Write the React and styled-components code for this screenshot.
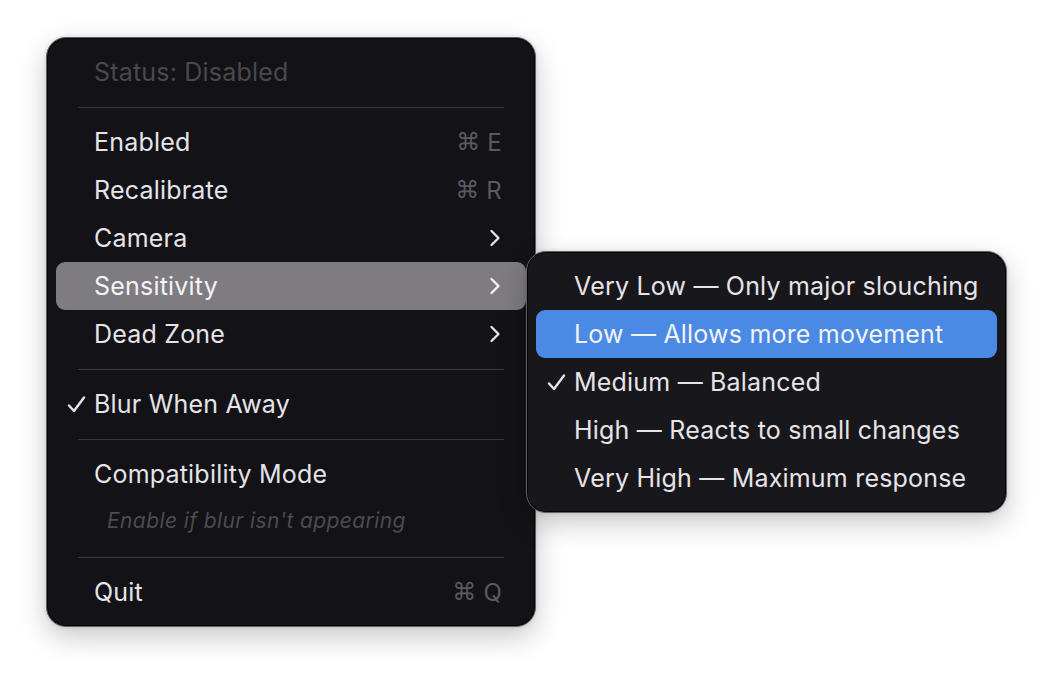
import React from "react";
import styled, { createGlobalStyle } from "styled-components";

const GlobalStyle = createGlobalStyle`
  html, body {
    margin: 0;
    background: #ffffff;
  }
  body {
    font-family: Inter, "Noto Sans", "DejaVu Sans", sans-serif;
    -webkit-font-smoothing: antialiased;
  }
`;

const Stage = styled.div`
  width: 1054px;
  height: 680px;
  box-sizing: border-box;
  padding: 37px 0 0 46px;
`;

const Panel = styled.div`
  box-sizing: border-box;
  width: ${(p) => p.$width}px;
  padding: 10px 9px;
  background: #131216;
  border: 1px solid #626166;
  border-radius: 20px;
  box-shadow: inset 0 0 0 1px #050407, 0 10px 28px rgba(0, 0, 0, 0.22),
    0 0 4px rgba(0, 0, 0, 0.12);
`;

const Flyout = styled(Panel)`
  position: absolute;
  top: -11px;
  left: 470px;
  z-index: 2;
  background: #18171b;
`;

const Item = styled.div`
  position: relative;
  display: grid;
  grid-template-columns: 38px 1fr auto;
  align-items: center;
  height: 48px;
  padding-right: ${(p) => (p.$submenu ? 25 : 24)}px;
  border-radius: 9px;
  font-size: 25px;
  letter-spacing: 0.2px;
  color: ${(p) => (p.$disabled ? "#4a494e" : "#e6e4e9")};
  background: ${(p) =>
    p.$active === "blue" ? "#4a89e4" : p.$active ? "#7e7c81" : "transparent"};
  ${(p) => p.$active && "color: #f4f3f6;"}
`;

const CheckCell = styled.span`
  display: flex;
  align-items: center;
  padding-left: 11px;
`;

const Label = styled.span`
  white-space: nowrap;
`;

const Shortcut = styled.span`
  display: flex;
  align-items: center;
  gap: 7px;
  color: #5b5a5f;
  font-size: 24px;
`;

const CmdGlyph = styled.span`
  font-family: "DejaVu Sans", sans-serif;
  font-size: 24px;
`;

const Hint = styled.div`
  height: 48px;
  display: flex;
  align-items: center;
  padding: 0 0 4px 51px;
  box-sizing: border-box;
  font-size: 21px;
  letter-spacing: 0.4px;
  font-style: italic;
  color: #4c4b50;
`;

const Separator = styled.div`
  height: 22px;
  margin: 0 22px;
  display: flex;
  align-items: center;
  &::after {
    content: "";
    flex: 1;
    height: 1px;
    background: #3a393e;
  }
`;

const Check = () => (
  <svg width="19" height="17" viewBox="0 0 19 17">
    <path
      d="M2 9.5 L7 15 L17 1.5"
      fill="none"
      stroke="currentColor"
      strokeWidth="2.4"
      strokeLinecap="round"
      strokeLinejoin="round"
    />
  </svg>
);

const Chevron = () => (
  <svg width="12" height="18" viewBox="0 0 12 18">
    <path
      d="M2.5 2 L9.5 9 L2.5 16"
      fill="none"
      stroke="currentColor"
      strokeWidth="2.3"
      strokeLinecap="round"
      strokeLinejoin="round"
    />
  </svg>
);

const MenuItem = ({ label, checked, shortcut, submenu, active, disabled, children }) => (
  <Item $active={active} $disabled={disabled} $submenu={submenu}>
    <CheckCell>{checked && <Check />}</CheckCell>
    <Label>{label}</Label>
    {shortcut && (
      <Shortcut>
        <CmdGlyph>⌘</CmdGlyph>
        {shortcut}
      </Shortcut>
    )}
    {submenu && <Chevron />}
    {children}
  </Item>
);

const sensitivityLevels = [
  { label: "Very Low — Only major slouching" },
  { label: "Low — Allows more movement", active: "blue" },
  { label: "Medium — Balanced", checked: true },
  { label: "High — Reacts to small changes" },
  { label: "Very High — Maximum response" },
];

const App = () => (
  <>
    <GlobalStyle />
    <Stage>
      <Panel $width={490}>
        <MenuItem label="Status: Disabled" disabled />
        <Separator />
        <MenuItem label="Enabled" shortcut="E" />
        <MenuItem label="Recalibrate" shortcut="R" />
        <MenuItem label="Camera" submenu />
        <MenuItem label="Sensitivity" submenu active>
          <Flyout $width={481}>
            {sensitivityLevels.map((lvl) => (
              <MenuItem key={lvl.label} {...lvl} />
            ))}
          </Flyout>
        </MenuItem>
        <MenuItem label="Dead Zone" submenu />
        <Separator />
        <MenuItem label="Blur When Away" checked />
        <Separator />
        <MenuItem label="Compatibility Mode" />
        <Hint>Enable if blur isn't appearing</Hint>
        <Separator />
        <MenuItem label="Quit" shortcut="Q" />
      </Panel>
    </Stage>
  </>
);

export default App;
